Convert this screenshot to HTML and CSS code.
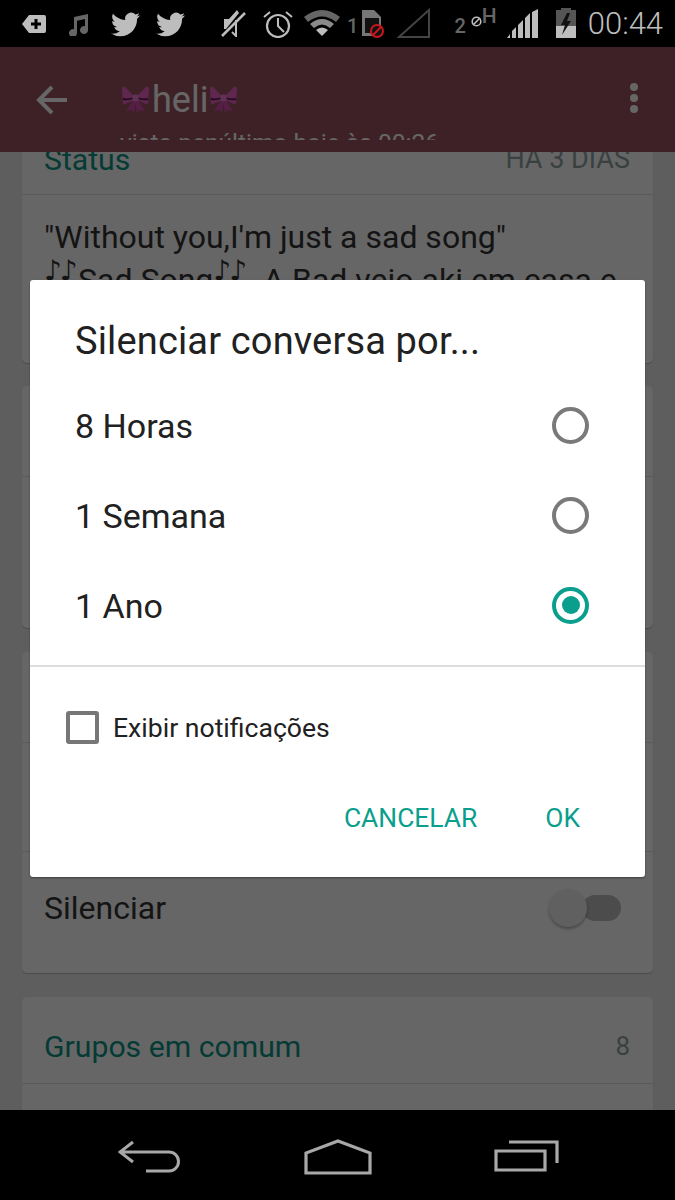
FILE: index.html
```html
<!DOCTYPE html>
<html lang="pt">
<head>
  <meta charset="UTF-8">
  <meta name="viewport" content="width=device-width, initial-scale=1.0">
  <title>Silenciar conversa</title>
  <link rel="stylesheet" href="styles.css">
</head>
<body>
  <svg class="defs" width="0" height="0">
    <symbol id="bird" viewBox="0 0 24 24"><path fill="#bdbdbd" d="M23.953 4.57a10 10 0 01-2.825.775 4.958 4.958 0 002.163-2.723c-.951.555-2.005.959-3.127 1.184a4.92 4.92 0 00-8.384 4.482C7.69 8.095 4.067 6.13 1.64 3.162a4.822 4.822 0 00-.666 2.475c0 1.71.87 3.213 2.188 4.096a4.904 4.904 0 01-2.228-.616v.06a4.923 4.923 0 003.946 4.827 4.996 4.996 0 01-2.212.085 4.936 4.936 0 004.604 3.417 9.867 9.867 0 01-6.102 2.105c-.39 0-.779-.023-1.17-.067a13.995 13.995 0 007.557 2.209c9.053 0 13.998-7.496 13.998-13.985 0-.21 0-.42-.015-.63A9.935 9.935 0 0024 4.59z"/></symbol>
    <symbol id="bow" viewBox="0 0 27 27">
      <path fill="#ee62c4" d="M12 10L3 1Q0 0 0 3L1 17Q1 19 3 18L12 14z"/>
      <path fill="#ee62c4" d="M15 10L24 1Q27 0 27 3L26 17Q26 19 24 18L15 14z"/>
      <path fill="#d24cac" d="M11 14L4 25L10 24L12 27L14 15z"/>
      <path fill="#d24cac" d="M16 14L23 25L17 24L15 27L13 15z"/>
      <path fill="none" stroke="#5a1a50" stroke-width="1.800" d="M1 13Q7 14 11 12M26 13Q20 14 16 12"/>
      <rect x="10.500" y="8.500" width="6" height="7" rx="2" fill="#f080d4"/>
    </symbol>
  </svg>

  <div class="screen">
    <div class="statusbar">
      <svg class="ic ic-tag" width="24" height="20" viewBox="0 0 24 20"><path fill="#bdbdbd" d="M7 1h15a2 2 0 012 2v14a2 2 0 01-2 2H7L0 10z"/><path stroke="#000" stroke-width="3" d="M9 10h10M14 5v10"/></svg>
      <svg class="ic ic-music" width="20" height="23" viewBox="0 0 20 23"><path fill="#666" d="M6 4l14-3v16a4 4 0 11-3-3.800V6L9 7.800V20a4 4 0 11-3-3.800z"/></svg>
      <svg class="ic ic-bird1" width="29" height="29"><use href="#bird"/></svg>
      <svg class="ic ic-bird2" width="29" height="29"><use href="#bird"/></svg>
      <svg class="ic ic-mute" width="25" height="28" viewBox="0 0 25 28"><path fill="#bdbdbd" d="M3 10h5l8-9 2 3L5 20H3z"/><path fill="none" stroke="#bdbdbd" stroke-width="2" d="M15 11v16l-4-4"/><path stroke="#bdbdbd" stroke-width="2.500" d="M1 27L24 4"/></svg>
      <svg class="ic ic-alarm" width="30" height="28" viewBox="0 0 30 28"><circle cx="15" cy="16" r="11" fill="none" stroke="#bdbdbd" stroke-width="2.200"/><path fill="none" stroke="#bdbdbd" stroke-width="2" d="M15 8v8l6 6M1 7l6-5M29 7l-6-5"/></svg>
      <svg class="ic ic-wifi" width="36" height="27" viewBox="0 0 36 27"><path fill="#666" d="M0 8Q18-6 36 8L32 13Q18 2 4 13z"/><path fill="#8a8a8a" d="M6 15Q18 5 30 15l-4 4Q18 12 10 19z"/><path fill="#bdbdbd" d="M12 21q6-5 12 0l-6 6z"/></svg>
      <span class="sim-num">1</span>
      <svg class="ic ic-sim" width="22" height="28" viewBox="0 0 22 28"><path fill="#777" d="M0 0h12l7 7v19H0z"/><rect x="3" y="8" width="14" height="15" fill="#111"/><circle cx="15" cy="21" r="6" fill="#111" stroke="#c8161d" stroke-width="2"/><path stroke="#c8161d" stroke-width="2" d="M11 25l8-8"/></svg>
      <svg class="ic ic-tri" width="33" height="30" viewBox="0 0 33 30"><path fill="none" stroke="#444" stroke-width="2" d="M2 29L32 2v27z"/></svg>
      <span class="sim-num sim-two">2</span>
      <span class="net">
        <svg class="ic-off" width="11" height="11" viewBox="0 0 11 11"><circle cx="5.500" cy="5.500" r="4.300" fill="none" stroke="#bdbdbd" stroke-width="1.600"/><path stroke="#bdbdbd" stroke-width="1.600" d="M2 9l7-7"/></svg>
        <span class="net-h">H</span>
      </span>
      <svg class="ic ic-signal" width="32" height="29" viewBox="0 0 32 29"><path fill="#bdbdbd" d="M0 29l3-4v4zM5 29v-7l4-4v11zM11 29V16l5-5v18zM18 29V9l5-5v25zM25 29V3l6-3v29z"/></svg>
      <svg class="ic ic-batt" width="20" height="30" viewBox="0 0 20 30"><path fill="#555" d="M5 2V0h10v2h5v16H0V2z"/><path fill="#bdbdbd" d="M0 18h20v12H0z"/><path fill="#111" d="M11 5l-6 12h4l-3 10 9-14h-4l3-8z"/></svg>
      <span class="clock">00:44</span>
    </div>

    <div class="app">
      <header class="appbar">
        <svg class="appbar-back" width="32" height="32" viewBox="0 0 32 32"><path fill="none" stroke="#fff" stroke-width="4" d="M31 16H4M16 3L3 16l13 13"/></svg>
        <div class="appbar-title">
          <div class="appbar-name"><svg class="bow" width="27" height="27"><use href="#bow"/></svg>heli<svg class="bow" width="27" height="27"><use href="#bow"/></svg></div>
          <div class="appbar-seen">visto penúltimo hoje às 00:26</div>
        </div>
        <div class="appbar-menu"><i></i><i></i><i></i></div>
      </header>

      <main class="content">
        <section class="card card-status">
          <div class="row row-status">
            <span class="card-head">Status</span>
            <span class="card-meta">HÁ 3 DIAS</span>
          </div>
          <p class="status-text">"Without you,I'm just a sad song"<br><span class="notes">♪♪</span>Sad Song<span class="notes">♪♪</span>&nbsp; A Bad veio aki em casa e</p>
        </section>

        <section class="card card-media">
          <div class="row row-media"></div>
        </section>

        <section class="card card-settings">
          <div class="row row-a"></div>
          <div class="row row-b"></div>
          <div class="row-mute">
            <span class="mute-label">Silenciar</span>
            <span class="switch"><span class="switch-thumb"></span></span>
          </div>
        </section>

        <section class="card card-groups">
          <div class="row row-groups">
            <span class="card-head">Grupos em comum</span>
            <span class="card-count">8</span>
          </div>
        </section>
      </main>

      <div class="scrim">
        <div class="dialog">
          <h2 class="dialog-title">Silenciar conversa por...</h2>
          <div class="option"><span class="option-label">8 Horas</span><span class="radio"></span></div>
          <div class="option"><span class="option-label">1 Semana</span><span class="radio"></span></div>
          <div class="option"><span class="option-label">1 Ano</span><span class="radio radio-on"></span></div>
          <div class="dialog-check">
            <span class="checkbox"></span>
            <span>Exibir notificações</span>
          </div>
          <div class="dialog-actions">
            <span>CANCELAR</span>
            <span>OK</span>
          </div>
        </div>
      </div>
    </div>

    <nav class="navbar">
      <svg width="64" height="34" viewBox="0 0 64 34"><path fill="none" stroke="#a8a8a8" stroke-width="3" d="M15 3L2 13l13 10M2 13h49a9.500 9.500 0 010 19H28"/></svg>
      <svg width="68" height="36" viewBox="0 0 68 36"><path fill="none" stroke="#a8a8a8" stroke-width="3.200" d="M2 34V14L34 2l32 12v20z"/></svg>
      <svg width="65" height="33" viewBox="0 0 65 33"><path fill="none" stroke="#a8a8a8" stroke-width="3.200" d="M2 12h49v19H2zM15 3h48v21"/></svg>
    </nav>
  </div>
</body>
</html>
```

FILE: styles.css
```css
* {
  box-sizing: border-box;
}

body {
  margin: 0;
  font-family: 'Roboto', sans-serif;
  background: #000;
}

.defs {
  position: absolute;
}

.screen {
  width: 675px;
  height: 1200px;
  display: flex;
  flex-direction: column;
  overflow: hidden;
}

/* status bar */
.statusbar {
  height: 47px;
  flex-shrink: 0;
  display: flex;
  align-items: flex-start;
  background: #000;
  color: #bdbdbd;
}

.ic {
  display: block;
  flex-shrink: 0;
}

.ic-tag { margin: 14px 0 0 22px; }
.ic-music { margin: 13px 0 0 22px; }
.ic-bird1 { margin: 10px 0 0 23px; }
.ic-bird2 { margin: 10px 0 0 16px; }
.ic-mute { margin: 9px 0 0 36px; }
.ic-alarm { margin: 10px 0 0 17px; }
.ic-wifi { margin: 9px 0 0 11px; }
.ic-sim { margin: 10px 0 0 4px; }
.ic-tri { margin: 8px 0 0 13px; }
.ic-signal { margin: 9px 0 0 12px; }
.ic-batt { margin: 8px 0 0 17px; }

.sim-num {
  margin: 15px 0 0 7px;
  font-size: 20px;
  line-height: 22px;
  font-weight: 500;
  color: #666;
}

.sim-two {
  margin-left: 24px;
}

.net {
  width: 24px;
  margin-left: 5px;
  display: flex;
  align-items: flex-start;
}

.ic-off {
  margin-top: 16px;
  flex-shrink: 0;
}

.net-h {
  margin-top: 6px;
  font-size: 21px;
  line-height: 20px;
  font-weight: 500;
  color: #666;
}

.clock {
  margin: 8px 0 0 12px;
  font-size: 31px;
  line-height: 32px;
  font-weight: 300;
}

/* app */
.app {
  position: relative;
  flex: 1;
  min-height: 0;
  display: flex;
  flex-direction: column;
  background: #ebebeb;
}

.appbar {
  position: relative;
  z-index: 1;
  height: 105px;
  flex-shrink: 0;
  display: flex;
  align-items: flex-start;
  background: #9b5361;
  color: #fff;
}

.appbar-back {
  margin: 37px 0 0 36px;
  flex-shrink: 0;
}

.appbar-title {
  width: 400px;
  height: 63px;
  margin: 30px 0 0 52px;
  overflow: hidden;
}

.appbar-name {
  height: 45px;
  display: flex;
  align-items: center;
  font-size: 36px;
}

.bow {
  flex-shrink: 0;
  margin: 0 3px 0 2px;
}

.appbar-seen {
  font-size: 24.5px;
  line-height: 42px;
  white-space: nowrap;
}

.appbar-menu {
  margin: 36px 0 0 auto;
  padding-right: 37px;
  display: flex;
  flex-direction: column;
  gap: 3px;
}

.appbar-menu i {
  display: block;
  width: 8px;
  height: 8px;
  border-radius: 50%;
  background: #fff;
}

/* cards behind the dialog */
.content {
  flex: 1;
  min-height: 0;
  padding: 0 22px;
  overflow: hidden;
}

.card {
  background: #fff;
  border-radius: 5px;
  box-shadow: 0 1px 1px rgba(0, 0, 0, 0.2);
  margin-bottom: 24px;
}

.card-status {
  height: 233px;
  margin-top: -22px;
  margin-bottom: 23px;
}

.card-media {
  height: 242px;
}

.card-settings {
  height: 321px;
}

.card-groups {
  height: 140px;
}

.row {
  display: flex;
  align-items: center;
  justify-content: space-between;
  padding: 0 23px 0 22px;
  border-bottom: 1px solid #e0e0e0;
}

.row-status {
  height: 65px;
  padding-bottom: 6px;
}

.row-media {
  height: 91px;
}

.row-a {
  height: 91px;
}

.row-b {
  height: 109px;
}

.row-groups {
  height: 87px;
  padding-top: 12px;
}

.card-head {
  font-size: 30.2px;
  color: #0e9486;
}

.card-meta {
  font-size: 27px;
  color: #8fa3a0;
}

.card-count {
  font-size: 26px;
  color: #8fa3a0;
}

.status-text {
  margin: 0;
  padding: 21px 22px 0;
  font-size: 32px;
  line-height: 43px;
  color: #333;
  white-space: nowrap;
  overflow: hidden;
}

.notes {
  display: inline-block;
  width: 34px;
  font-family: 'DejaVu Sans', sans-serif;
  font-size: 28px;
  line-height: 0;
  letter-spacing: -2px;
  vertical-align: 11px;
  white-space: nowrap;
}

.row-mute {
  display: flex;
  align-items: center;
  justify-content: space-between;
  padding: 36px 32px 0 22px;
}

.mute-label {
  font-size: 32px;
  line-height: 40px;
  color: #333;
}

.switch {
  position: relative;
  width: 39px;
  height: 26px;
  border-radius: 13px;
  background: #bdbdbd;
}

.switch-thumb {
  position: absolute;
  top: -6px;
  left: -33px;
  width: 38px;
  height: 38px;
  border-radius: 50%;
  background: #f1f1f1;
  box-shadow: 0 2px 3px rgba(0, 0, 0, 0.3);
}

/* dialog */
.scrim {
  position: absolute;
  inset: 0;
  z-index: 2;
  display: flex;
  align-items: center;
  justify-content: center;
  background: rgba(0, 0, 0, 0.6);
}

.dialog {
  width: 615px;
  height: 597px;
  background: #fff;
  border-radius: 3px;
  box-shadow: 0 1px 2px rgba(0, 0, 0, 0.4);
  color: #212121;
}

.dialog-title {
  margin: 0;
  padding: 38px 45px 0;
  height: 100px;
  font-size: 38px;
  line-height: 46px;
  font-weight: 400;
  letter-spacing: 0.15px;
}

.option {
  height: 90px;
  padding: 0 56px 0 45px;
  display: flex;
  align-items: center;
  justify-content: space-between;
  font-size: 34px;
}

.option-label {
  padding-top: 2px;
}

.radio {
  width: 37px;
  height: 37px;
  border: 4px solid #7a7a7a;
  border-radius: 50%;
  display: flex;
  align-items: center;
  justify-content: center;
}

.radio-on {
  border-color: #0a9f8d;
}

.radio-on::after {
  content: "";
  width: 18px;
  height: 18px;
  border-radius: 50%;
  background: #0a9f8d;
}

.dialog-check {
  height: 123px;
  margin-top: 15px;
  padding: 0 0 0 36px;
  border-top: 2px solid #ddd;
  display: flex;
  align-items: center;
  gap: 14px;
  font-size: 26.6px;
}

.checkbox {
  width: 33px;
  height: 33px;
  border: 4px solid #777;
  border-radius: 3px;
}

.dialog-actions {
  display: flex;
  justify-content: flex-end;
  gap: 68px;
  padding: 0 65px 0 0;
  margin-top: 13px;
  font-size: 26.4px;
  line-height: 34px;
  color: #0a9f8d;
}

/* nav */
.navbar {
  height: 90px;
  flex-shrink: 0;
  display: flex;
  align-items: flex-start;
  background: #000;
  padding: 29px 116px 0 118px;
  justify-content: space-between;
}
```
